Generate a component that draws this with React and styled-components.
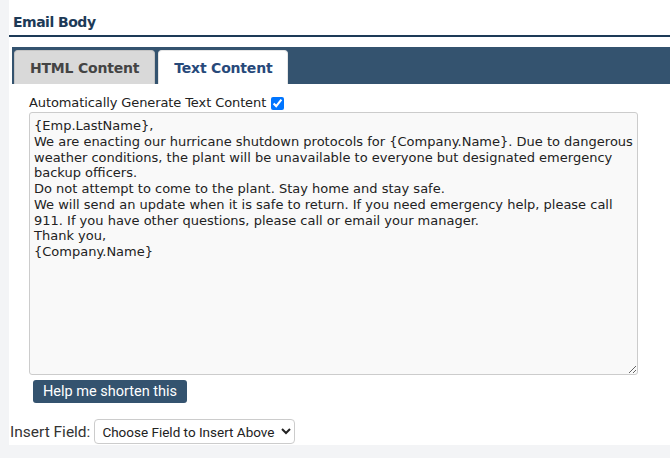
import React, { useState } from "react";
import styled, { createGlobalStyle } from "styled-components";

const colors = {
  navy: "#1d3a57",
  bar: "#34536f",
  page: "#f3f4f6",
  tabGray: "#d9d9d9",
};

const Global = createGlobalStyle`
  html, body {
    margin: 0;
    padding: 0;
    background: ${colors.page};
  }
`;

const Page = styled.div`
  display: flex;
  width: 670px;
  height: 458px;
  background: ${colors.page};
`;

const Panel = styled.div`
  margin-left: 9px;
  flex: 1;
  height: 445px;
  background: #fff;
  display: flex;
  flex-direction: column;
`;

const Heading = styled.h2`
  margin: 0;
  padding: 14px 0 5px 4px;
  border-bottom: 2px solid ${colors.navy};
  font-family: "DejaVu Sans", Verdana, sans-serif;
  font-size: 14px;
  letter-spacing: -0.5px;
  font-weight: bold;
  color: ${colors.navy};
  line-height: 16px;
`;

const TabBar = styled.div`
  margin: 10px 0 0 3px;
  height: 37px;
  box-sizing: border-box;
  padding: 3px 0 0 2px;
  background: ${colors.bar};
  display: flex;
  align-items: flex-end;
  gap: 3px;
`;

const Tab = styled.div`
  height: 34px;
  box-sizing: border-box;
  padding: 0 15px;
  display: flex;
  align-items: center;
  border: 1px solid ${(p) => (p.$active ? "#e6e6e6" : "#c4c4c4")};
  border-bottom: none;
  border-radius: 4px 4px 0 0;
  background: ${(p) => (p.$active ? "#fff" : colors.tabGray)};
  color: ${(p) => (p.$active ? "#27497a" : "#444")};
  font-family: "DejaVu Sans", Verdana, sans-serif;
  font-size: 14px;
  letter-spacing: -0.2px;
  font-weight: bold;
  cursor: pointer;
`;

const Body = styled.div`
  padding: 11px 0 0 20px;
  display: flex;
  flex-direction: column;
  align-items: flex-start;
`;

const CheckRow = styled.label`
  display: flex;
  align-items: center;
  gap: 5px;
  font-family: "DejaVu Sans", Verdana, sans-serif;
  font-size: 13px;
  letter-spacing: -0.1px;
  color: #222;
  line-height: 16px;
  input {
    margin: 0;
    width: 13px;
    height: 13px;
    accent-color: #0075ff;
  }
`;

const TextArea = styled.textarea`
  margin-top: 1px;
  width: 609px;
  height: 263px;
  box-sizing: border-box;
  padding: 5px 4px;
  border: 1px solid #ccc;
  border-radius: 3px;
  background: #f9f9f9;
  font-family: "DejaVu Sans", Verdana, sans-serif;
  font-size: 13px;
  line-height: 15.75px;
  color: #222;
  resize: both;
  outline: none;
`;

const Button = styled.button`
  margin: 5px 0 0 4px;
  height: 23px;
  padding: 0 10px;
  border: none;
  border-radius: 3px;
  background: ${colors.bar};
  color: #fff;
  font-family: Roboto, "Noto Sans", sans-serif;
  font-size: 14.5px;
  cursor: pointer;
`;

const FieldRow = styled.div`
  margin: 16px 0 0 -19px;
  display: flex;
  align-items: center;
  gap: 4px;
  font-family: Roboto, "Noto Sans", sans-serif;
  font-size: 15.5px;
  color: #333;
`;

const Select = styled.select`
  height: 25px;
  padding: 0 3px;
  border: 1px solid #ccc;
  border-radius: 4px;
  background: #fff;
  font-family: Roboto, "Noto Sans", sans-serif;
  font-size: 13.5px;
  color: #222;
`;

const text = `{Emp.LastName},
We are enacting our hurricane shutdown protocols for {Company.Name}. Due to dangerous weather conditions, the plant will be unavailable to everyone but designated emergency backup officers.
Do not attempt to come to the plant. Stay home and stay safe.
We will send an update when it is safe to return. If you need emergency help, please call 911. If you have other questions, please call or email your manager.
Thank you,
{Company.Name}`;

export default function App() {
  const [tab, setTab] = useState("text");
  const [auto, setAuto] = useState(true);
  const [body, setBody] = useState(text);
  return (
    <Page>
      <Global />
      <Panel>
        <Heading>Email Body</Heading>
        <TabBar>
          <Tab $active={tab === "html"} onClick={() => setTab("html")}>
            HTML Content
          </Tab>
          <Tab $active={tab === "text"} onClick={() => setTab("text")}>
            Text Content
          </Tab>
        </TabBar>
        <Body>
          <CheckRow>
            Automatically Generate Text Content
            <input type="checkbox" checked={auto} onChange={(e) => setAuto(e.target.checked)} />
          </CheckRow>
          <TextArea value={body} onChange={(e) => setBody(e.target.value)} />
          <Button>Help me shorten this</Button>
          <FieldRow>
            Insert Field:
            <Select defaultValue="">
              <option value="">Choose Field to Insert Above</option>
            </Select>
          </FieldRow>
        </Body>
      </Panel>
    </Page>
  );
}
